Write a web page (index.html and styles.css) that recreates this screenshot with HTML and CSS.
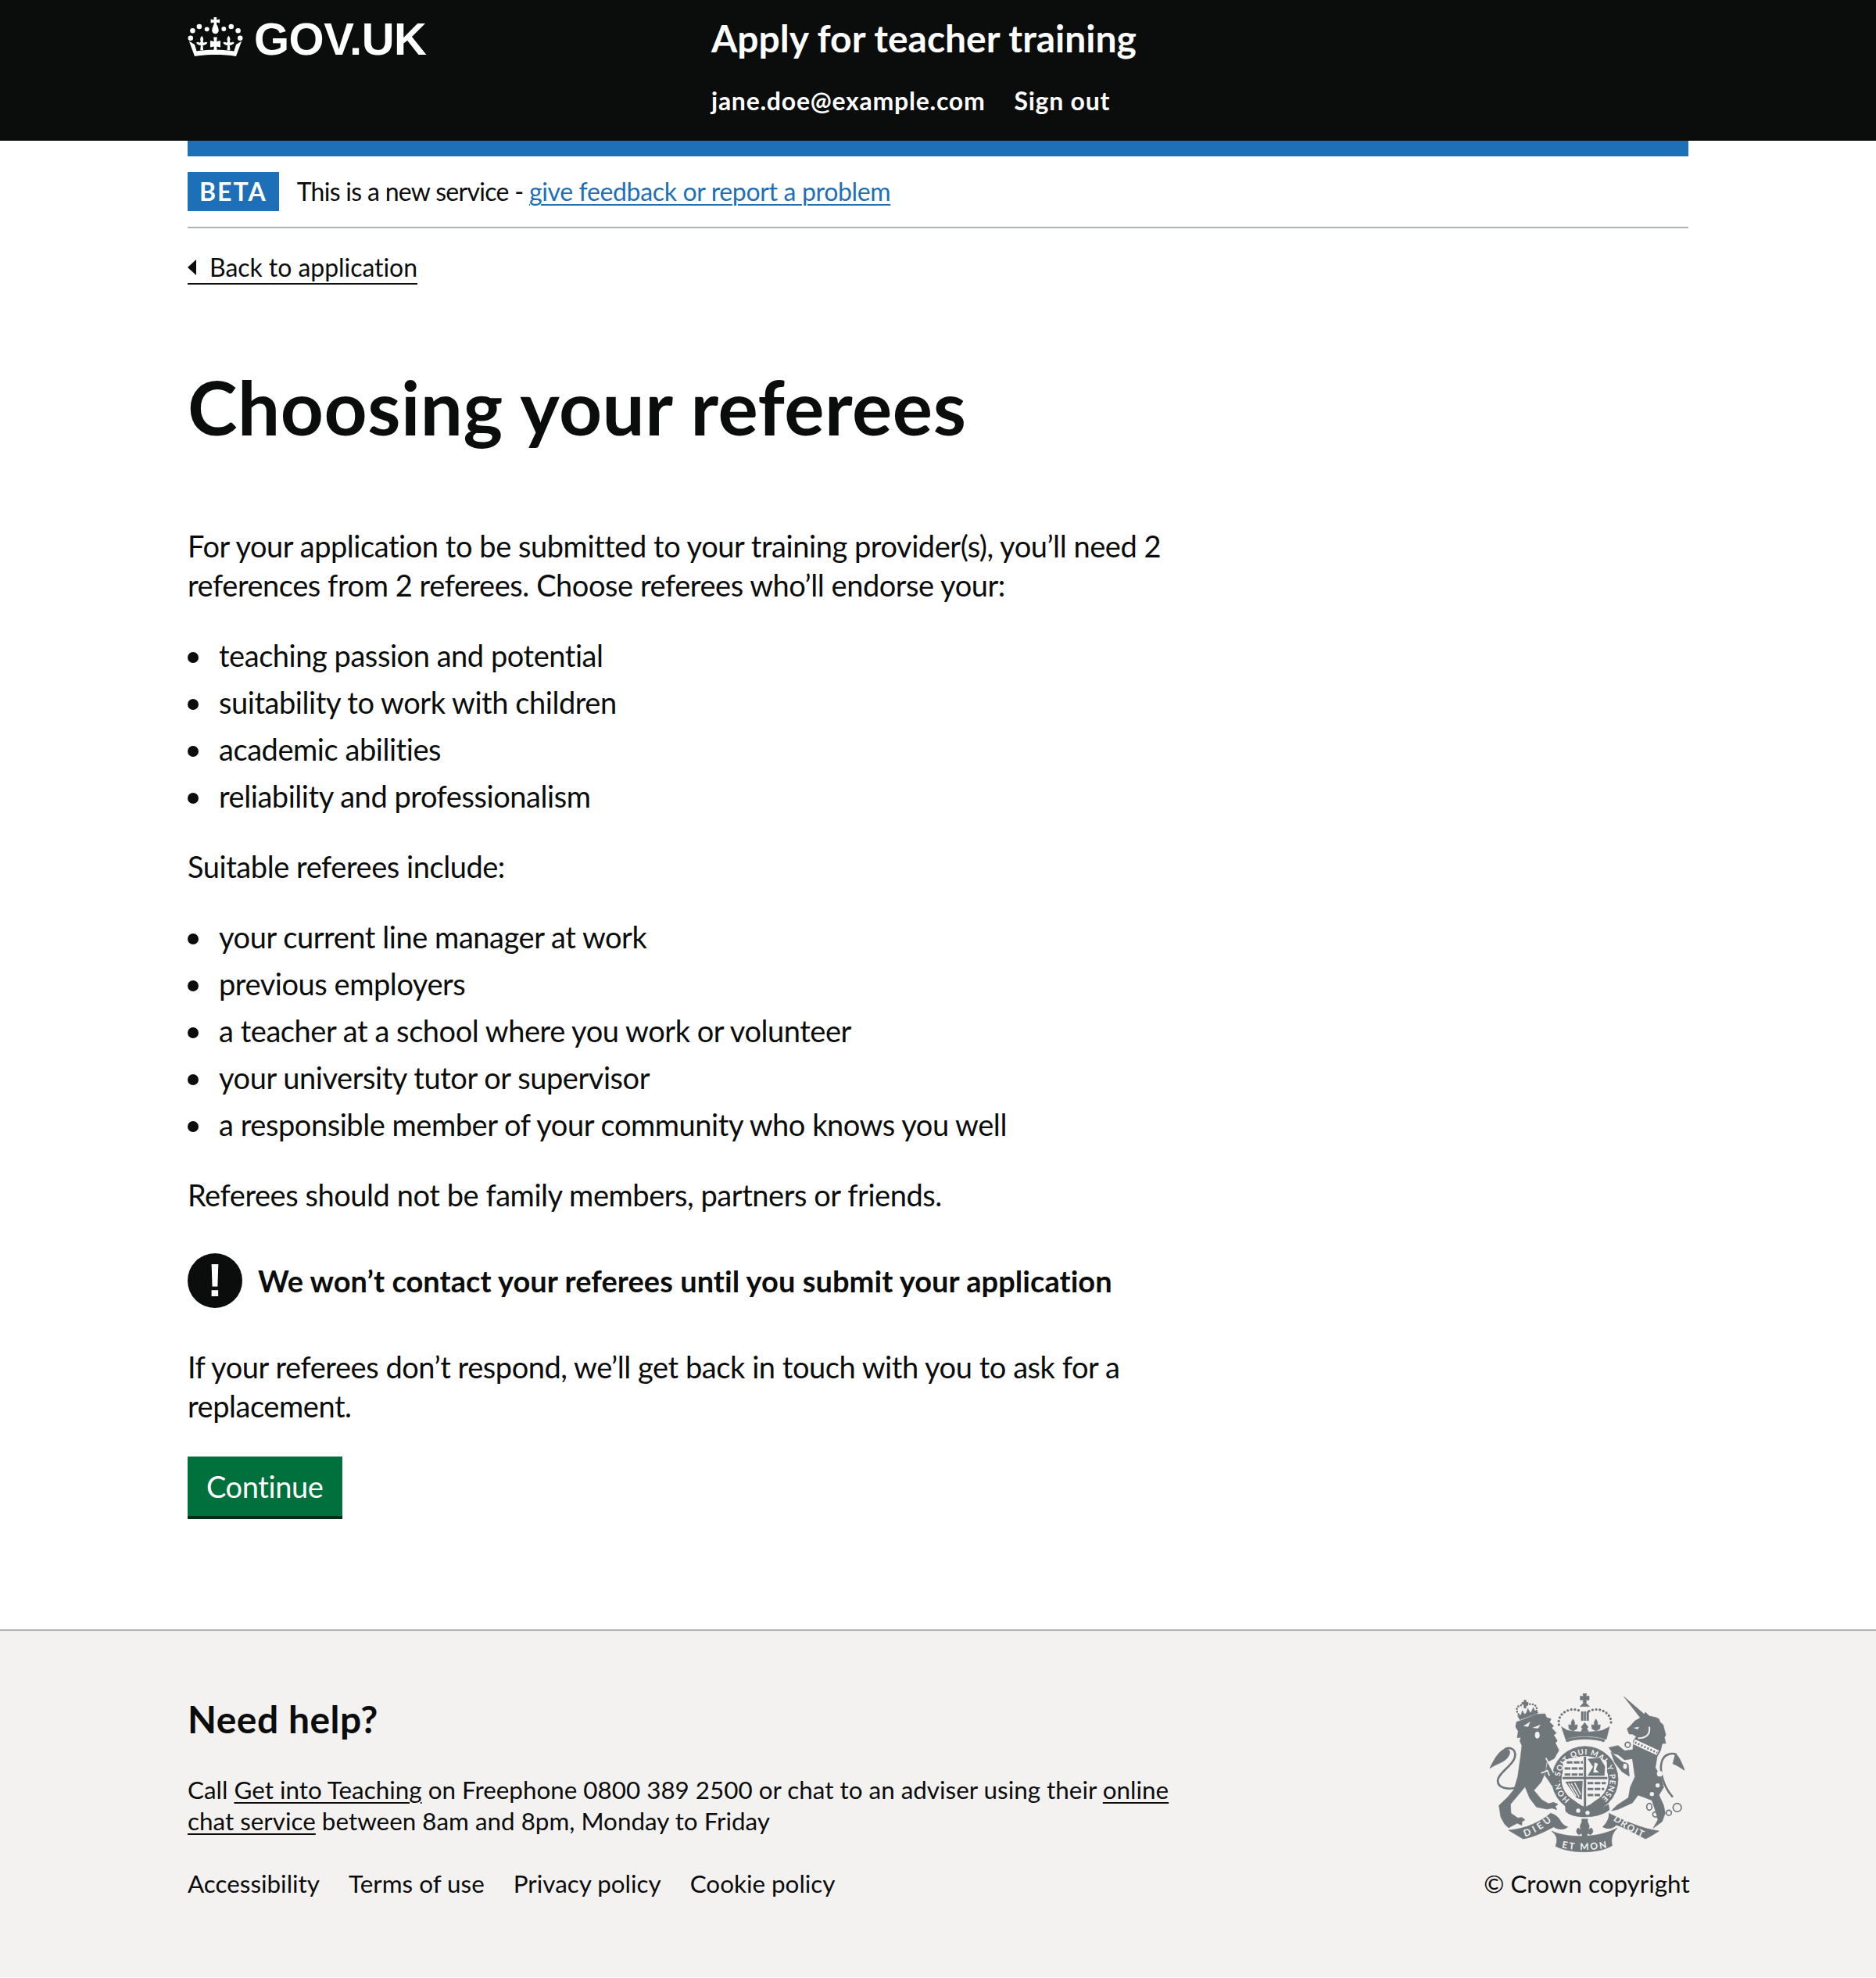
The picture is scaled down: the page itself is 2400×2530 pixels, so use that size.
FILE: index.html
```html
<!DOCTYPE html>
<html lang="en">
<head>
    <meta charset="UTF-8">
    <meta name="viewport" content="width=device-width, initial-scale=1.0">
    <title>Choosing your referees - Apply for teacher training - GOV.UK</title>
    <link rel="stylesheet" href="styles.css">
</head>
<body>

    <header class="header">
        <div class="header-inner">
            <a class="logo" href="#">
                <svg class="logo-crown" viewBox="45 35 216 156" aria-hidden="true">
                    <g fill="#fff">
                        <circle cx="90" cy="72" r="10"/>
                        <circle cx="120" cy="82" r="9"/>
                        <circle cx="64" cy="88" r="10"/>
                        <circle cx="186" cy="81" r="9"/>
                        <circle cx="215" cy="72" r="10"/>
                        <circle cx="242" cy="88" r="10"/>
                        <circle cx="56" cy="117" r="10"/>
                        <circle cx="250" cy="117" r="10"/>
                        <path d="M147,35h11v11l12,-3v15l-12,-3v8c6,10 8,18 8,24c0,7 -6,13 -13,13s-13,-6 -13,-13c0,-6 2,-14 7,-24v-8l-12,3v-15l12,3z"/>
                        <path d="M146,113h14l-2,17l15,-3v26l-15,-3l2,17h-14l2,-17l-15,3v-26l15,3z"/>
                        <path d="M100,108c6,8 8,14 4,22l4,5c5,-3 9,-4 14,-1c-2,5 -6,9 -12,10l-6,1l2,19h-12l2,-19l-6,-1c-6,-1 -10,-5 -12,-10c5,-3 9,-2 14,1l4,-5c-4,-8 -2,-14 4,-22z"/>
                        <path d="M205,108c6,8 8,14 4,22l4,5c5,-3 9,-4 14,-1c-2,5 -6,9 -12,10l-6,1l2,19h-12l2,-19l-6,-1c-6,-1 -10,-5 -12,-10c5,-3 9,-2 14,1l4,-5c-4,-8 -2,-14 4,-22z"/>
                        <path d="M50,128l22,14l8,26c40,-7 106,-7 146,0l8,-26l22,-14l-22,60c-50,-8 -112,-8 -162,0z"/>
                    </g>
                </svg>
                <span class="logo-text">GOV.UK</span>
            </a>
            <div class="service">
                <a class="service-name" href="#">Apply for teacher training</a>
                <nav class="service-nav">
                    <a href="#">jane.doe@example.com</a>
                    <a href="#">Sign out</a>
                </nav>
            </div>
        </div>
    </header>

    <div class="container">
        <div class="blue-bar"></div>

        <div class="phase-banner">
            <strong class="phase-tag">BETA</strong>
            <span>This is a new service - <a class="link" href="#">give feedback or report a problem</a></span>
        </div>

        <a class="back-link" href="#">Back to application</a>

        <main class="main">
            <h1>Choosing your referees</h1>

            <div class="column">
                <p>For your application to be submitted to your training provider(s), you’ll need 2 references from 2 referees. Choose referees who’ll endorse your:</p>

                <ul>
                    <li>teaching passion and potential</li>
                    <li>suitability to work with children</li>
                    <li>academic abilities</li>
                    <li>reliability and professionalism</li>
                </ul>

                <p>Suitable referees include:</p>

                <ul>
                    <li>your current line manager at work</li>
                    <li>previous employers</li>
                    <li>a teacher at a school where you work or volunteer</li>
                    <li>your university tutor or supervisor</li>
                    <li>a responsible member of your community who knows you well</li>
                </ul>

                <p>Referees should not be family members, partners or friends.</p>

                <div class="warning">
                    <span class="warning-icon" aria-hidden="true">!</span>
                    <strong>We won’t contact your referees until you submit your application</strong>
                </div>

                <p>If your referees don’t respond, we’ll get back in touch with you to ask for a replacement.</p>

                <a class="button" href="#">Continue</a>
            </div>
        </main>
    </div>

    <footer class="footer">
        <div class="footer-inner">
            <div class="footer-left">
                <h2>Need help?</h2>
                <div class="footer-help">
                    <div>Call <a href="#">Get into Teaching</a> on Freephone 0800 389 2500 or chat to an adviser using their <a href="#">online</a></div>
                    <div><a href="#">chat service</a> between 8am and 8pm, Monday to Friday</div>
                </div>
                <div class="footer-links">
                    <a href="#">Accessibility</a>
                    <a href="#">Terms of use</a>
                    <a href="#">Privacy policy</a>
                    <a href="#">Cookie policy</a>
                </div>
            </div>
            <div class="footer-meta">
                <svg class="crest" viewBox="130 80 750 612" aria-hidden="true">
                    <defs>
                        <path id="garter" d="M440,487 A96,96 0 1 1 556,487"/>
                        <path id="dieu" d="M268,630 C305,618 340,596 374,566"/>
                        <path id="etmon" d="M408,672 C465,684 530,684 590,670"/>
                        <path id="droit" d="M606,566 C640,590 680,618 724,636"/>
                    </defs>

                    <!-- lion -->
                    <g class="crest-fill">
                        <path d="M235,190 L262,180 L310,160 L345,158 L350,172 L368,178 L362,190 L378,205 L370,212 L388,232 L378,240 L392,262 L384,270 L398,298 L380,330 L350,345 L345,385 L330,420 L302,452 L332,488 L358,503 L378,498 L394,505 L384,514 L390,526 L372,520 L352,524 L312,516 L286,482 L268,438 L245,466 L212,505 L214,540 L240,558 L256,556 L268,565 L256,572 L256,586 L238,578 L226,584 L205,596 L190,582 L175,555 L168,510 L200,480 L225,450 L240,400 L250,330 L256,280 L248,262 L252,248 L238,250 L242,225 L232,208 Z"/>
                        <path d="M190,293 C170,300 150,330 133,367 C155,352 180,347 196,332 C207,320 215,305 205,295 Z"/>
                    </g>
                    <path class="crest-line" d="M242,440 C200,452 158,442 164,410 C170,380 234,350 230,312 C228,290 205,285 190,295" stroke-width="8"/>
                    <g class="crest-bg">
                        <path d="M262,205 L288,188 L280,208 Z"/>
                        <path d="M296,212 L328,200 L318,214 Z"/>
                        <ellipse cx="315" cy="240" rx="9" ry="13"/>
                    </g>

                    <!-- lion's crown -->
                    <path class="crest-line" d="M243,160 C226,136 245,122 262,126 M276,124 C295,116 320,124 311,150" stroke-width="8" stroke-linecap="round" stroke-dasharray="0 11"/>
                    <g class="crest-fill">
                        <path d="M264,106h8v8h8v8h-8v14h-8v-14h-8v-8h8z"/>
                        <path d="M240,166 L314,146 L317,155 L248,181 Z"/>
                        <path d="M252,165 L258,146 L265,160 Z"/>
                        <path d="M272,159 L279,138 L287,154 Z"/>
                        <path d="M292,153 L300,134 L306,150 Z"/>
                    </g>

                    <!-- royal crown -->
                    <g class="crest-fill">
                        <path d="M490,80h14l-2,12l12,-2v16l-12,-2l2,10h-14l2,-10l-12,2v-16l12,2z"/>
                        <path d="M497,112l18,18h-36z"/>
                        <path d="M484,150h7v34h-7zM495,150h6v34h-6zM505,150h7v34h-7z"/>
                        <path d="M452,178c8,12 8,18 5,24l12,-2l-2,16l-15,8l-15,-8l-2,-16l12,2c-3,-6 -3,-12 5,-24z"/>
                        <path d="M540,178c8,12 8,18 5,24l12,-2l-2,16l-15,8l-15,-8l-2,-16l12,2c-3,-6 -3,-12 5,-24z"/>
                        <path d="M497,192l14,18l-6,4l6,12h-28l6,-12l-6,-4z"/>
                        <path d="M408,208 L430,222 C470,230 525,230 565,222 L592,208 L580,256 C530,240 465,240 424,256 Z"/>
                        <path d="M424,258 C465,244 530,244 574,258 L571,266 C530,252 465,252 428,266 Z"/>
                    </g>
                    <path class="crest-line" d="M398,200 C390,158 440,128 480,148" stroke-width="10" stroke-linecap="round" stroke-dasharray="0 14"/>
                    <path class="crest-line" d="M514,148 C555,128 606,158 597,200" stroke-width="10" stroke-linecap="round" stroke-dasharray="0 14"/>

                    <!-- unicorn -->
                    <g class="crest-fill">
                        <path d="M648,93 L728,162 L714,178 Z"/>
                        <path d="M660,216 L672,205 L690,185 L708,175 L722,168 L730,152 L745,167 L770,172 L782,178 L786,190 L798,200 L802,216 L808,240 L803,248 L808,272 L795,272 L788,300 L775,322 L768,365 L790,400 L800,440 L782,470 L800,510 L806,540 L794,572 L760,597 L778,565 L770,535 L755,490 L702,470 L680,500 L625,525 L600,530 L620,510 L665,480 L672,440 L690,400 L680,330 L684,262 L695,245 L680,236 L668,236 Z"/>
                        <path d="M845,312 C860,320 870,350 882,377 C865,365 850,355 835,350 Z"/>
                    </g>
                    <path class="crest-line" d="M835,478 C800,440 783,380 792,345 C798,315 830,305 850,315" stroke-width="8"/>
                    <path class="crest-line-bg" d="M745,208 C750,240 730,252 702,252" stroke-width="6"/>
                    <path class="crest-line-bg" d="M686,265 L778,308" stroke-width="20"/>
                    <path class="crest-line" d="M690,268 L776,308" stroke-width="8" stroke-dasharray="6 7"/>
                    <g class="crest-bg">
                        <path d="M684,212 L706,208 L700,218 Z"/>
                        <circle cx="785" cy="388" r="11"/>
                        <circle cx="777" cy="433" r="8"/>
                        <circle cx="755" cy="466" r="8"/>
                    </g>
                    <g class="crest-line" stroke-width="5">
                        <ellipse cx="745" cy="515" rx="10" ry="13"/>
                        <ellipse cx="770" cy="544" rx="12" ry="10"/>
                        <circle cx="820" cy="538" r="10"/>
                        <circle cx="852" cy="518" r="16"/>
                    </g>

                    <!-- garter and shield -->
                    <circle cx="498" cy="410" r="127" class="crest-fill"/>
                    <circle cx="498" cy="410" r="90" class="crest-bg"/>
                    <text class="crest-text crest-garter"><textPath href="#garter" textLength="472" lengthAdjust="spacing">HONI SOIT QUI MAL Y PENSE</textPath></text>
                    <path d="M414,342 C440,316 556,316 582,342 L584,408 C584,456 540,498 498,516 C456,498 412,456 412,408 Z" class="crest-bg"/>
                    <path class="crest-line" d="M498,322V516M412,405H584" stroke-width="9"/>
                    <g class="crest-line" stroke-width="9" stroke-dasharray="22 5">
                        <path d="M428,345H490"/>
                        <path d="M420,368H490"/>
                        <path d="M420,391H490"/>
                        <path d="M508,424H578"/>
                        <path d="M508,447H572"/>
                        <path d="M508,470H556"/>
                    </g>
                    <path class="crest-fill" d="M510,332 L555,328 L574,360 L572,395 L510,395 L530,362 Z"/>
                    <path class="crest-bg" d="M535,345 L548,350 L540,372 L552,384 L530,384 Z"/>
                    <path class="crest-fill" d="M424,420 L488,416 L485,486 L466,480 Z"/>
                    <path class="crest-line-bg" d="M445,425 L476,478 M458,422 L482,468 M435,425 L464,474" stroke-width="4"/>

                    <!-- fore legs that lie over the garter -->
                    <g class="crest-fill">
                        <path d="M355,345 L382,395 L400,412 L395,432 L380,425 L372,435 L362,420 L345,395 Z"/>
                        <path d="M590,288 L625,280 L650,300 L684,296 L684,330 L650,335 L625,315 L605,310 Z"/>
                        <path d="M598,306 L640,342 L664,352 L668,398 L640,380 L612,345 Z"/>
                    </g>
                    <path class="crest-line-bg" d="M348,328 L378,384 M330,386 L354,376 L362,396" stroke-width="5"/>
                    <g class="crest-ring" stroke-width="5">
                        <circle cx="662" cy="277" r="10"/>
                        <ellipse cx="652" cy="360" rx="10" ry="13"/>
                    </g>

                    <!-- motto scroll -->
                    <g class="crest-fill">
                        <path d="M422,500 C450,534 550,534 588,506 L592,526 C550,562 450,562 424,532 Z"/>
                        <path d="M205,605 C270,600 330,572 366,540 C385,545 395,555 402,566 C408,578 420,590 432,592 C420,604 395,604 378,592 C340,612 300,632 260,638 Z"/>
                        <path d="M370,608 C390,625 395,640 385,666 C440,696 550,696 602,664 C598,640 600,620 622,596 C560,632 440,640 370,608 Z"/>
                        <path d="M566,592 C585,575 592,555 590,540 C650,570 720,600 782,608 C760,622 745,632 730,638 C680,612 640,590 618,585 C605,600 585,602 566,592 Z"/>
                        <path d="M486,562h22v12c8,12 8,20 2,30l12,-8c10,8 8,22 -4,26l-10,-6l-2,14l-9,8l-9,-8l-2,-14l-10,6c-12,-4 -14,-18 -4,-26l12,8c-6,-10 -6,-18 2,-30z"/>
                    </g>
                    <g class="crest-bg">
                        <circle cx="472" cy="530" r="8"/>
                        <circle cx="508" cy="538" r="8"/>
                    </g>
                    <text class="crest-text"><textPath href="#dieu" textLength="120" lengthAdjust="spacing">DIEU</textPath></text>
                    <text class="crest-text"><textPath href="#etmon" textLength="176" lengthAdjust="spacing">ET MON</textPath></text>
                    <text class="crest-text"><textPath href="#droit" textLength="130" lengthAdjust="spacing">DROIT</textPath></text>
                </svg>
                <span>© Crown copyright</span>
            </div>
        </div>
    </footer>

</body>
</html>
```

FILE: styles.css
```css
* {
    box-sizing: border-box;
}
body {
    font-family: Lato, "Noto Sans", sans-serif;
    font-size: 38px;
    line-height: 50px;
    letter-spacing: -0.45px;
    color: #0b0c0c;
    background-color: #fff;
    margin: 0;
    padding: 0;
}
p {
    margin: 0 0 40px;
}
a {
    color: inherit;
}

/* header */
.header {
    background-color: #0b0c0c;
    color: #fff;
    height: 180px;
    padding-top: 20px;
}
.header-inner {
    width: 1920px;
    margin: 0 auto;
    display: flex;
}
.logo {
    width: 670px;
    display: flex;
    align-items: flex-start;
    gap: 14px;
    text-decoration: none;
}
.logo-crown {
    width: 71px;
    height: 51px;
    margin-top: 2px;
}
.logo-text {
    font-family: "Liberation Sans", sans-serif;
    font-weight: bold;
    font-size: 58px;
    line-height: 60px;
    letter-spacing: -0.5px;
}
.service-name {
    display: block;
    font-size: 48px;
    font-weight: bold;
    line-height: 60px;
    letter-spacing: 0;
    text-decoration: none;
    margin-top: -1px;
}
.service-nav {
    display: flex;
    gap: 37px;
    margin-top: 30px;
    font-size: 32px;
    font-weight: bold;
    line-height: 40px;
    letter-spacing: 0.75px;
}
.service-nav a {
    text-decoration: none;
}

/* page */
.container {
    width: 1920px;
    margin: 0 auto;
}
.blue-bar {
    height: 20px;
    background-color: #1d70b8;
}
.phase-banner {
    display: flex;
    align-items: center;
    gap: 23px;
    padding: 20px 0;
    border-bottom: 2px solid #b1b4b6;
    font-size: 32px;
    line-height: 50px;
    letter-spacing: -0.7px;
}
.phase-tag {
    background-color: #1d70b8;
    color: #fff;
    padding: 0 15px;
    letter-spacing: 2px;
    line-height: 50px;
}
.link {
    color: #1d70b8;
    letter-spacing: -0.35px;
    text-decoration-thickness: 2px;
    text-underline-offset: 4px;
}
.back-link {
    display: inline-flex;
    align-items: center;
    gap: 17px;
    margin-top: 30px;
    border-bottom: 2px solid #0b0c0c;
    font-size: 32px;
    line-height: 40px;
    letter-spacing: -0.05px;
    text-decoration: none;
}
.back-link::before {
    content: "";
    border-style: solid;
    border-width: 10px 11px 10px 0;
    border-color: transparent #0b0c0c transparent transparent;
}
.main {
    padding: 106px 0 145px;
}
h1 {
    font-size: 96px;
    font-weight: bold;
    line-height: 100px;
    letter-spacing: 0.55px;
    margin: 0 0 103px;
}
.column {
    width: 1270px;
}
ul {
    list-style: none;
    margin: 0 0 40px;
    padding: 0 0 0 40px;
}
li {
    position: relative;
    margin-bottom: 10px;
}
li:last-child {
    margin-bottom: 0;
}
li::before {
    content: "";
    position: absolute;
    left: -40px;
    top: 21px;
    width: 14px;
    height: 14px;
    border-radius: 50%;
    background-color: #0b0c0c;
}
.warning {
    display: flex;
    align-items: center;
    gap: 20px;
    padding: 10px 0;
    margin-bottom: 40px;
    letter-spacing: 0.05px;
}
.warning-icon {
    flex: none;
    width: 70px;
    height: 70px;
    border-radius: 50%;
    background-color: #0b0c0c;
    color: #fff;
    font-family: "Liberation Sans", sans-serif;
    font-size: 60px;
    font-weight: bold;
    line-height: 70px;
    text-align: center;
}
.button {
    display: inline-block;
    background-color: #00703c;
    color: #fff;
    padding: 13px 24px;
    box-shadow: 0 4px 0 #002d18;
    text-decoration: none;
    letter-spacing: -0.4px;
}

/* footer */
.footer {
    background-color: #f3f2f1;
    border-top: 2px solid #b1b4b6;
    padding: 80px 0 100px;
    font-size: 31.4px;
    line-height: 40px;
    letter-spacing: 0;
}
.footer a {
    text-decoration-thickness: 2px;
    text-underline-offset: 4px;
}
.footer-inner {
    width: 1920px;
    margin: 0 auto;
    display: flex;
    justify-content: space-between;
}
.footer-left {
    width: 1270px;
}
.footer-help {
    margin-bottom: 40px;
    white-space: nowrap;
}
h2 {
    font-size: 48px;
    font-weight: bold;
    line-height: 66px;
    letter-spacing: 0.5px;
    margin: 0 0 37px;
}
.footer-links {
    display: flex;
    gap: 37px;
}
.footer-links a {
    text-decoration: none;
}
.footer-meta {
    width: 260px;
    display: flex;
    flex-direction: column;
    align-items: center;
    gap: 19px;
    white-space: nowrap;
}

/* crest */
.crest {
    display: block;
    width: 250px;
    height: 204px;
}
.crest-fill {
    fill: #6f777b;
    stroke: #6f777b;
    stroke-width: 2;
    stroke-linejoin: round;
}
.crest-bg {
    fill: #f3f2f1;
}
.crest-line {
    fill: none;
    stroke: #6f777b;
}
.crest-line-bg {
    fill: none;
    stroke: #f3f2f1;
}
.crest-ring {
    fill: #f3f2f1;
    stroke: #6f777b;
}
.crest-text {
    font-family: Lato, sans-serif;
    font-size: 36px;
    font-weight: bold;
    letter-spacing: 0;
    fill: #f3f2f1;
}
.crest-garter {
    font-size: 30px;
}
```
